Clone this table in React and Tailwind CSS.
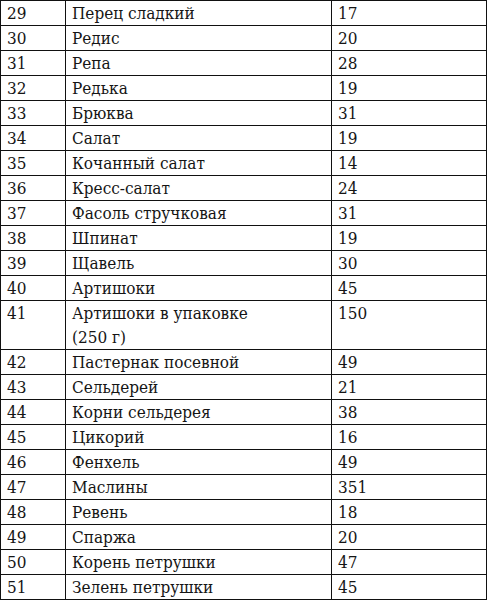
const rows = [
  ['29', 'Перец сладкий', '17'],
  ['30', 'Редис', '20'],
  ['31', 'Репа', '28'],
  ['32', 'Редька', '19'],
  ['33', 'Брюква', '31'],
  ['34', 'Салат', '19'],
  ['35', 'Кочанный салат', '14'],
  ['36', 'Кресс-салат', '24'],
  ['37', 'Фасоль стручковая', '31'],
  ['38', 'Шпинат', '19'],
  ['39', 'Щавель', '30'],
  ['40', 'Артишоки', '45'],
  ['41', ['Артишоки в упаковке', '(250 г)'], '150'],
  ['42', 'Пастернак посевной', '49'],
  ['43', 'Сельдерей', '21'],
  ['44', 'Корни сельдерея', '38'],
  ['45', 'Цикорий', '16'],
  ['46', 'Фенхель', '49'],
  ['47', 'Маслины', '351'],
  ['48', 'Ревень', '18'],
  ['49', 'Спаржа', '20'],
  ['50', 'Корень петрушки', '47'],
  ['51', 'Зелень петрушки', '45'],
];

export default function App() {
  return (
    <div className="bg-white w-[487px] h-[600px] overflow-hidden" style={{ fontFamily: '"DejaVu Serif Condensed", "DejaVu Serif", serif' }}>
      <table className="border-collapse w-[486px] table-fixed text-[17px] leading-[24px] text-[#151515] [font-stretch:condensed]">
        <colgroup>
          <col className="w-[65px]" />
          <col className="w-[266px]" />
          <col className="w-[155px]" />
        </colgroup>
        <tbody>
          {rows.map(([n, name, kcal]) => (
            <tr key={n}>
              <td className="border border-[#111] px-[6px] py-0 align-top h-[24px]">{n}</td>
              <td className="border border-[#111] px-[6px] py-0 align-top">
                {Array.isArray(name) ? (
                  <>
                    {name[0]}
                    <br />
                    {name[1]}
                  </>
                ) : (
                  name
                )}
              </td>
              <td className="border border-[#111] px-[6px] py-0 align-top">{kcal}</td>
            </tr>
          ))}
        </tbody>
      </table>
    </div>
  );
}
